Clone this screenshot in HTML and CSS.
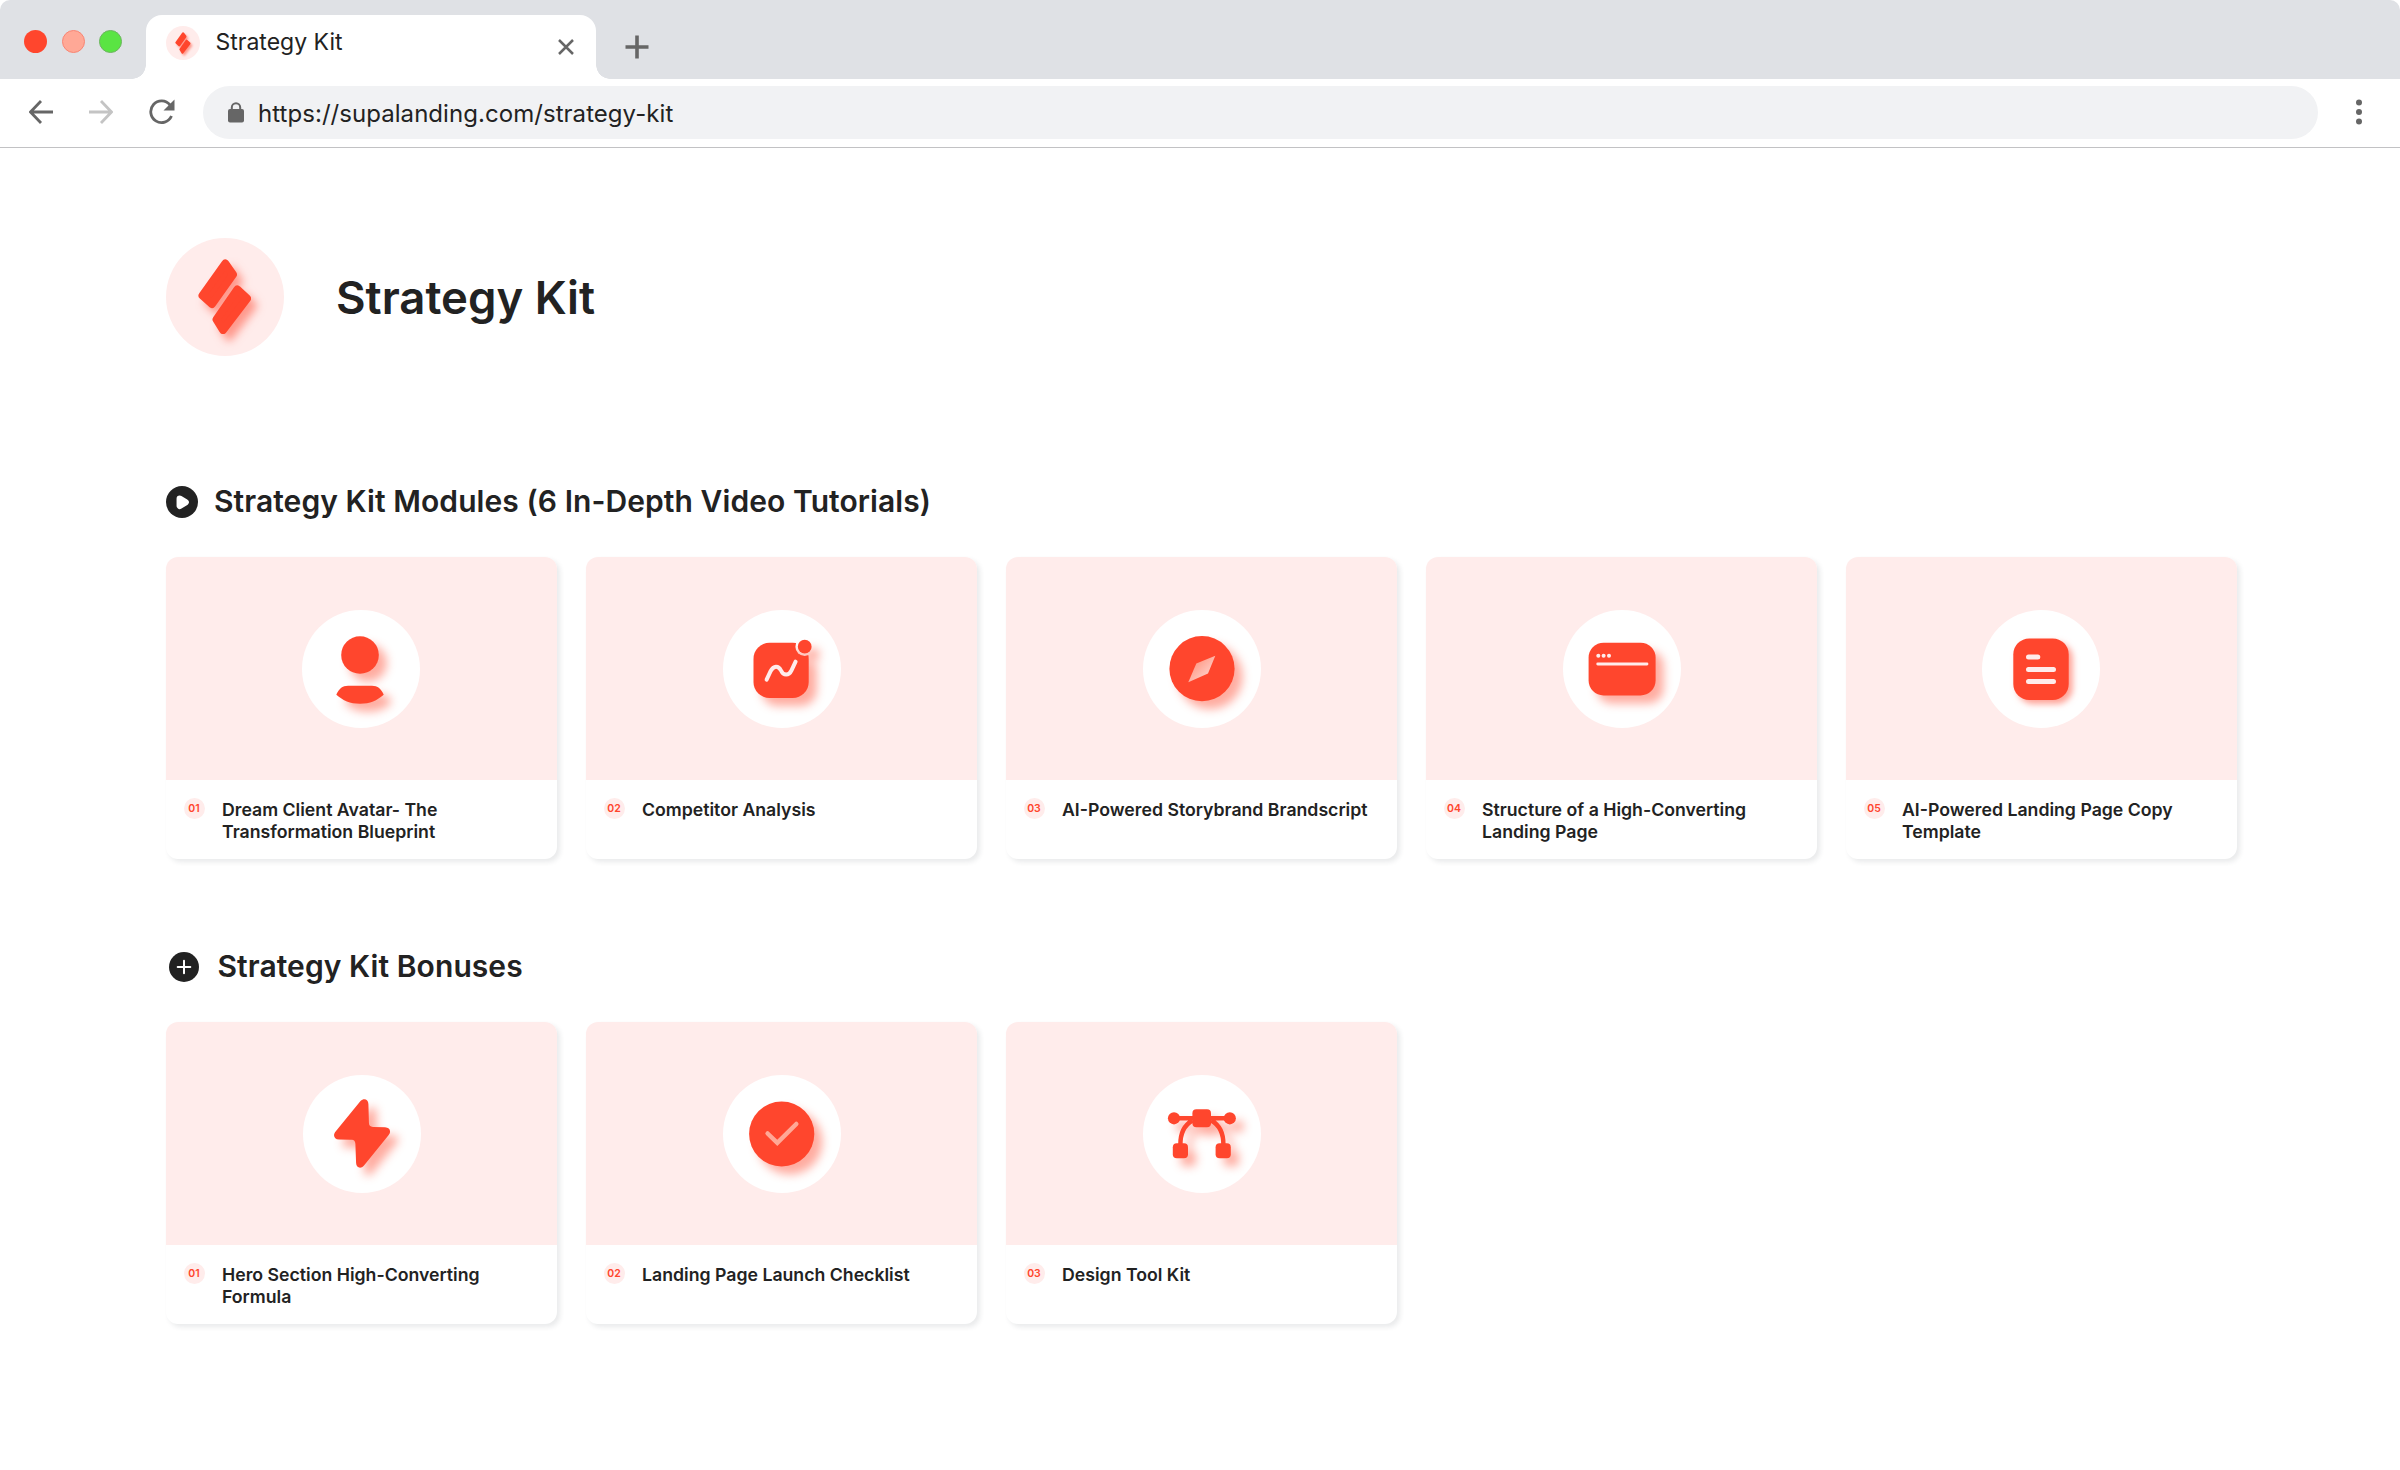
FILE: index.html
```html
<!DOCTYPE html>
<html lang="en">
<head>
  <meta charset="UTF-8" />
  <meta name="viewport" content="width=device-width, initial-scale=1.0" />
  <title>Strategy Kit</title>
  <link rel="stylesheet" href="styles.css">
</head>
<body>
  <!-- Browser chrome -->
  <header class="browser">
    <div class="tab-bar">
      <div class="lights">
        <span class="light red"></span>
        <span class="light peach"></span>
        <span class="light green"></span>
      </div>
      <div class="tab">
        <svg class="favicon" viewBox="0 0 118 118">
          <g class="logo-mark">
            <path d="M59.3 25.5L67 36.5L46 66L36.5 57.5Z"/>
            <path d="M71.3 51.5L81 60.5L57 92L50.5 81.5Z"/>
          </g>
        </svg>
        <span class="tab-title">Strategy Kit</span>
        <svg class="tab-close" viewBox="0 0 16 16"><path d="M1 1L15 15M15 1L1 15"/></svg>
      </div>
      <svg class="tab-new" viewBox="0 0 24 24"><path d="M12 0.500V23.500M0.500 12H23.500"/></svg>
    </div>
    <div class="toolbar">
      <svg class="nav-icon" viewBox="0 0 24 24"><path d="M24 12H2M12 1L1.500 12L12 23"/></svg>
      <svg class="nav-icon disabled" viewBox="0 0 24 24"><path d="M0 12H22M12 1L22.500 12L12 23"/></svg>
      <svg class="nav-icon reload" viewBox="0 0 26 26">
        <path d="M22.500 17A10.800 10.800 0 1 1 21 6"/>
        <path class="solid" d="M25.500 0.500V11.500H14.500Z"/>
      </svg>
      <div class="address">
        <svg class="lock" viewBox="0 0 16 21">
          <rect x="0" y="7" width="16" height="13.500" rx="2"/>
          <path d="M3.800 8V5.500A4.200 4.200 0 0 1 12.200 5.500V8"/>
        </svg>
        <span class="url">https://supalanding.com/strategy-kit</span>
      </div>
      <svg class="menu" viewBox="0 0 6 26"><circle cx="3" cy="3.500" r="3"/><circle cx="3" cy="13" r="3"/><circle cx="3" cy="22.400" r="3"/></svg>
    </div>
  </header>

  <main>
    <div class="title">
      <svg class="logo" viewBox="0 0 118 118">
        <g class="logo-mark">
          <path d="M59.3 25.5L67 36.5L46 66L36.5 57.5Z"/>
          <path d="M71.3 51.5L81 60.5L57 92L50.5 81.5Z"/>
        </g>
      </svg>
      <h1>Strategy Kit</h1>
    </div>

    <section class="modules">
      <div class="heading">
        <svg class="play" viewBox="0 0 32 32">
          <circle cx="16" cy="16" r="16"/>
          <path class="play-arrow" d="M13.800 12.800L19.600 16.200L13.800 19.800Z"/>
        </svg>
        <h2>Strategy Kit Modules (6 In-Depth Video Tutorials)</h2>
      </div>
      <div class="cards">
        <div class="card">
          <div class="thumb">
            <svg class="icon nudge" viewBox="0 0 118 118">
              <g class="shape">
                <circle cx="58" cy="45" r="18.800"/>
                <path d="M34.300 84.700C36.500 79 40.500 75.700 46 75.700H70C75.500 75.700 79.500 79 81.700 84.700C75 90.500 68 93.700 58 93.700S41 90.500 34.300 84.700Z"/>
              </g>
            </svg>
          </div>
          <div class="info">
            <span class="num">01</span>
            <h3>Dream Client Avatar- The Transformation Blueprint</h3>
          </div>
        </div>
        <div class="card">
          <div class="thumb">
            <svg class="icon" viewBox="0 0 118 118">
              <mask id="notch">
                <rect width="118" height="118" fill="#fff"/>
                <circle cx="81.700" cy="36.700" r="9.300" fill="#000"/>
              </mask>
              <g class="shape">
                <rect x="30.500" y="32.700" width="55.200" height="55.300" rx="16" mask="url(#notch)"/>
                <circle cx="81.700" cy="36.700" r="6.900"/>
              </g>
              <path class="line wide" d="M43.600 69.700L47.600 61.200C50.500 55.200 55.500 55.300 58 60.500C60.500 66 65.800 66 68.500 60.300L72.600 51.700"/>
            </svg>
          </div>
          <div class="info">
            <span class="num">02</span>
            <h3>Competitor Analysis</h3>
          </div>
        </div>
        <div class="card">
          <div class="thumb">
            <svg class="icon" viewBox="0 0 118 118">
              <linearGradient id="needle" x1="0.3" y1="0.3" x2="0.7" y2="0.7">
                <stop offset="0" stop-color="#ffa08e"/>
                <stop offset="1" stop-color="#ffc8bf"/>
              </linearGradient>
              <g class="shape"><circle cx="59" cy="58.700" r="32.600"/></g>
              <path fill="url(#needle)" d="M72.300 45.700L65 63.400L45.300 72.300L53.300 53.400Z"/>
            </svg>
          </div>
          <div class="info">
            <span class="num">03</span>
            <h3>AI-Powered Storybrand Brandscript</h3>
          </div>
        </div>
        <div class="card">
          <div class="thumb">
            <svg class="icon" viewBox="0 0 118 118">
              <g class="shape"><rect x="25.600" y="32.700" width="67" height="52.800" rx="15"/></g>
              <g class="dots"><circle cx="35.300" cy="45.700" r="2"/><circle cx="40.600" cy="45.700" r="2"/><circle cx="46" cy="45.700" r="2"/></g>
              <path class="line thin" d="M34.700 54H84"/>
            </svg>
          </div>
          <div class="info">
            <span class="num">04</span>
            <h3>Structure of a High-Converting Landing Page</h3>
          </div>
        </div>
        <div class="card">
          <div class="thumb">
            <svg class="icon nudge" viewBox="0 0 118 118">
              <g class="shape near"><rect x="31.300" y="28.400" width="55.400" height="61.600" rx="16"/></g>
              <path class="line doc" d="M46.500 47H55.800M46.500 59.400H71.500M46.500 71.500H71.500"/>
            </svg>
          </div>
          <div class="info">
            <span class="num">05</span>
            <h3>AI-Powered Landing Page Copy Template</h3>
          </div>
        </div>
      </div>
    </section>

    <section class="bonuses">
      <div class="heading">
        <svg class="plus" viewBox="0 0 30 30">
          <circle cx="15" cy="15" r="15"/>
          <path d="M15 8.700V21.300M8.700 15H21.300"/>
        </svg>
        <h2>Strategy Kit Bonuses</h2>
      </div>
      <div class="cards">
        <div class="card">
          <div class="thumb">
            <svg class="icon" viewBox="0 0 118 118">
              <g class="shape">
                <path d="M57.500 26C61 22.500 65.300 24.300 65.400 29L65.900 47.500C66 50.500 67 51.800 70 51.900L82 52.200C87 52.400 88.500 56.500 85.500 60.200L61 90.500C57.500 94.500 53.300 92.500 53.100 88L52.400 69C52.300 66 51.200 64.800 48 64.700L36 64.600C31 64.500 29.600 60 32.600 56.500Z"/>
              </g>
            </svg>
          </div>
          <div class="info">
            <span class="num">01</span>
            <h3>Hero Section High-Converting Formula</h3>
          </div>
        </div>
        <div class="card">
          <div class="thumb">
            <svg class="icon" viewBox="0 0 118 118">
              <g class="shape"><circle cx="58.700" cy="59" r="32.600"/></g>
              <path class="line check" d="M44.600 58.500L54.300 67.800L73.300 49"/>
            </svg>
          </div>
          <div class="info">
            <span class="num">02</span>
            <h3>Landing Page Launch Checklist</h3>
          </div>
        </div>
        <div class="card">
          <div class="thumb">
            <svg class="icon" viewBox="0 0 118 118">
              <g class="shape">
                <circle cx="31" cy="43.300" r="6.100"/>
                <circle cx="86.800" cy="43.300" r="6.100"/>
                <rect x="49.400" y="34.300" width="18.600" height="18" rx="4"/>
                <rect x="29.800" y="68.300" width="15.200" height="15" rx="4"/>
                <rect x="72.600" y="68.300" width="15.200" height="15" rx="4"/>
                <path class="curve" d="M31 43.300H86.800M37.400 70C37.200 58.500 41.500 50 49.500 45.500M80.400 70C80.600 58.500 76.300 50 68.300 45.500"/>
              </g>
            </svg>
          </div>
          <div class="info">
            <span class="num">03</span>
            <h3>Design Tool Kit</h3>
          </div>
        </div>
      </div>
    </section>
  </main>
</body>
</html>
```
FILE: styles.css
```css
* {
  box-sizing: border-box;
}
body {
  font-family: Inter, "Liberation Sans", sans-serif;
  background: #fff;
  color: #222;
  min-height: 1470px;
  margin: 0;
  padding: 0;
}
svg {
  display: block;
  flex: none;
}
h1, h2, h3 {
  margin: 0;
  font-weight: 600;
}

/* browser bar */
.tab-bar {
  display: flex;
  height: 79px;
  background: #dfe1e5;
  border-radius: 10px 10px 0 0;
}
.lights {
  display: flex;
  gap: 14.500px;
  width: 146px;
  padding: 30px 0 0 24px;
}
.light {
  width: 23px;
  height: 23px;
  border-radius: 50%;
}
.red {
  background: #ff462d;
}
.peach {
  background: #ffa896;
  border: 1px solid #f98573;
}
.green {
  background: #5ae443;
  border: 1px solid #6cb45f;
}
.tab {
  position: relative;
  display: flex;
  width: 450px;
  height: 64px;
  margin-top: 15px;
  padding-left: 20px;
  background: #fff;
  border-radius: 16px 16px 0 0;
}
.tab::before,
.tab::after {
  content: "";
  position: absolute;
  bottom: 0;
  width: 14px;
  height: 14px;
}
.tab::before {
  left: -14px;
  background: radial-gradient(circle at 0 0, transparent 13.500px, #fff 14px);
}
.tab::after {
  right: -14px;
  background: radial-gradient(circle at 100% 0, transparent 13.500px, #fff 14px);
}
.favicon {
  width: 34px;
  height: 34px;
  margin-top: 11px;
  background: #ffeceb;
  border-radius: 50%;
}
.tab-title {
  margin: 12px 0 0 15.500px;
  font-size: 23px;
  line-height: 30px;
}
.tab-close {
  width: 16px;
  height: 16px;
  margin: 24px 22px 0 auto;
  stroke: #666;
  stroke-width: 2.500;
}
.tab-new {
  width: 24px;
  height: 24px;
  margin: 35px 0 0 29px;
  stroke: #666;
  stroke-width: 3.600;
}
.toolbar {
  display: flex;
  align-items: center;
  height: 69px;
  padding: 0 38px 2px 29px;
  border-bottom: 1px solid #c2c2c4;
}
.nav-icon {
  width: 24px;
  height: 24px;
  margin-right: 36px;
  fill: none;
  stroke: #666;
  stroke-width: 2.800;
}
.disabled {
  stroke: #c4c4c4;
}
.reload {
  width: 26px;
  height: 26px;
  margin-right: 28px;
  stroke-width: 2.800;
}
.solid {
  fill: #666;
  stroke: none;
}
.address {
  display: flex;
  flex: 1;
  align-items: center;
  height: 53px;
  padding-left: 25px;
  background: #f1f2f4;
  border-radius: 27px;
}
.url {
  padding-top: 2px;
  font-size: 24px;
  letter-spacing: 0.05px;
}
.lock {
  width: 16px;
  height: 21px;
  margin-right: 14px;
  fill: #666;
}
.lock path {
  fill: none;
  stroke: #666;
  stroke-width: 2;
}
.menu {
  width: 6px;
  height: 26px;
  margin-left: 38px;
  fill: #666;
}

/* page */
main {
  padding: 90px 163px 100px 166px;
}
.title {
  display: flex;
  align-items: center;
  gap: 52px;
}
.title h1 {
  font-size: 45.500px;
}
.logo {
  width: 118px;
  height: 118px;
  background: #ffeceb;
  border-radius: 50%;
}
.logo-mark {
  fill: #ff462d;
  stroke: #ff462d;
  stroke-width: 8;
  stroke-linejoin: round;
  filter: drop-shadow(6px 7px 4px rgba(255, 70, 45, 0.5));
}
.heading {
  display: flex;
  align-items: center;
  height: 36px;
  margin-bottom: 37px;
}
.heading h2 {
  padding-bottom: 2px;
  font-size: 30px;
  letter-spacing: 0.07px;
}
.modules {
  margin-top: 128px;
}
.bonuses {
  margin-top: 90px;
}
.play {
  width: 32px;
  height: 32px;
  margin-right: 16px;
  fill: #222;
}
.play-arrow {
  fill: #fff;
  stroke: #fff;
  stroke-width: 6.500;
  stroke-linejoin: round;
}
.plus {
  width: 30px;
  height: 30px;
  margin: 0 18.500px 0 3px;
  fill: #222;
}
.plus path {
  stroke: #fff;
  stroke-width: 2;
  stroke-linecap: round;
}
.cards {
  display: grid;
  grid-template-columns: repeat(5, 391px);
  gap: 29px;
}
.card {
  height: 302px;
  background: #fff;
  border-radius: 12px;
  box-shadow: 3px 3px 5px rgba(40, 45, 60, 0.1);
}
.thumb {
  display: flex;
  align-items: center;
  justify-content: center;
  height: 222.500px;
  padding-top: 0.500px;
  background: #ffeceb;
  border-radius: 12px 12px 0 0;
}
.icon {
  width: 118px;
  height: 118px;
  background: #fff;
  border-radius: 50%;
}
.nudge {
  margin-right: 2px;
}
.shape {
  fill: #ff462d;
  filter: drop-shadow(8px 8px 5px rgba(255, 70, 45, 0.45));
}
.near {
  filter: drop-shadow(4px 4px 3px rgba(255, 70, 45, 0.5));
}
.line {
  fill: none;
  stroke: #ffeceb;
  stroke-linecap: round;
}
.wide {
  stroke-width: 4;
}
.thin {
  stroke-width: 2.800;
}
.doc {
  stroke-width: 5;
}
.check {
  stroke: #ffa896;
  stroke-width: 4.500;
}
.curve {
  fill: none;
  stroke: #ff462d;
  stroke-width: 4.500;
}
.dots {
  fill: #ffeceb;
}
.info {
  display: flex;
  padding: 18px 10px 0 17.500px;
}
.num {
  display: flex;
  align-items: center;
  justify-content: center;
  flex: none;
  width: 21px;
  height: 21px;
  margin-right: 17.500px;
  background: #ffeceb;
  border-radius: 50%;
  color: #ff462d;
  font-size: 10.500px;
  font-weight: 600;
}
.info h3 {
  max-width: 315px;
  padding-top: 1px;
  font-size: 17.700px;
  line-height: 22px;
}
```
